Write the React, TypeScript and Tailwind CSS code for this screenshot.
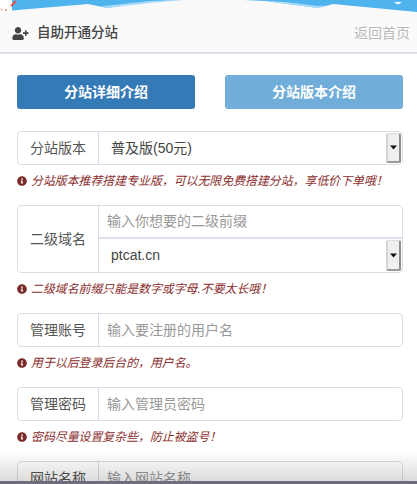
import React from "react";
import { FaUserPlus, FaInfoCircle } from "react-icons/fa";

const font = { fontFamily: '"Liberation Sans","Noto Sans CJK SC",sans-serif' };

function Arrow() {
  return (
    <div className="w-[15px] shrink-0 self-stretch mt-[1px] mb-[1px] mr-[1px] bg-[#efefef] border-l-[2px] border-l-[#d5d5d5] border-r-[2px] border-r-[#8e8e8e] border-b-[2px] border-b-[#9a9a9a] border-t border-t-[#dcdcdc] rounded-[2px] flex items-center justify-center">
      <svg width="7" height="5" viewBox="0 0 7 5"><path d="M0 0.5h7L3.5 4.5z" fill="#111" /></svg>
    </div>
  );
}

function Help({ text }: { text: string }) {
  return (
    <div className="flex items-center h-[18px] mt-[7px] text-[11.9px] italic text-[#8a2c2c]">
      <FaInfoCircle className="w-[10px] h-[10px] mr-[4px] text-[#7a2a2a] shrink-0" />
      <span className="pt-[1px]">{text}</span>
    </div>
  );
}

function Label({ text }: { text: string }) {
  return (
    <div className="w-[81px] shrink-0 flex items-center justify-center text-[14px] text-[#555] border-r border-[#d5dbe6]">
      {text}
    </div>
  );
}

function InputRow({ label, placeholder }: { label: string; placeholder: string }) {
  return (
    <div className="flex h-[34px] border border-[#d9dee8] rounded-[4px] bg-white">
      <Label text={label} />
      <div className="flex-1 pl-[8px] flex items-center text-[14px] text-[#999]">{placeholder}</div>
    </div>
  );
}

export default function App() {
  return (
    <div className="relative w-[417px] h-[484px] overflow-hidden bg-white" style={font}>
      <div className="relative h-[13px] bg-[#f9f9f9]">
        <svg className="absolute left-0 top-0" width="417" height="13" viewBox="0 0 417 13">
          <path d="M12 0H182L150 1.5L107 8L88 4L12 10.5Z" fill="#4fb3ee" />
          <path d="M100 6.5L150 1L182 0L150 3L107 8Z" fill="#a8dcf8" />
          <path d="M244 0H417V12L333 4L318 8L265 1Z" fill="#4fb3ee" />
          <path d="M262 0.5L285 2L318 6L325 5.5L318 8Z" fill="#a8dcf8" />
          <path d="M394 2h8l-4 2.5z" fill="#fff" />
          <path d="M0 0H12V10.5L9 13H0Z" fill="#fff" />
          <path d="M11 6L16 1" stroke="#e2574c" strokeWidth="2" />
          <circle cx="1.5" cy="9.5" r="1" fill="#f3a39a" />
          <circle cx="6" cy="10" r="1" fill="#e2874c" />
        </svg>
      </div>
      <div className="flex items-center justify-between h-[41px] bg-[#fafafa] border-b-[2px] border-[#dde2ea] pl-[12px] pr-[7px] pt-[2px]">
        <div className="flex items-center">
          <FaUserPlus className="w-[17px] h-[13px] text-[#444]" />
          <span className="ml-[8px] text-[13.5px] text-[#444] font-medium">自助开通分站</span>
        </div>
        <span className="text-[14px] text-[#bbb]">返回首页</span>
      </div>
      <div className="pl-[17px] pr-[14px] pt-[21px]">
        <div className="flex justify-between">
          <div className="w-[178px] h-[34px] rounded-[3px] bg-[#337ab7] text-white text-[14px] font-bold flex items-center justify-center">分站详细介绍</div>
          <div className="w-[178px] h-[34px] rounded-[3px] bg-[#70aed9] text-white text-[14px] font-bold flex items-center justify-center">分站版本介绍</div>
        </div>
        <div className="mt-[22px] flex h-[34px] border border-[#d9dee8] rounded-[4px] bg-white">
          <Label text="分站版本" />
          <div className="flex-1 pl-[12px] flex items-center text-[14px] text-[#444]">普及版(50元)</div>
          <Arrow />
        </div>
        <Help text="分站版本推荐搭建专业版，可以无限免费搭建分站，享低价下单哦！" />
        <div className="mt-[15px] flex h-[68px] border border-[#d9dee8] rounded-[4px] bg-white">
          <Label text="二级域名" />
          <div className="flex-1 flex flex-col">
            <div className="h-[33px] pl-[8px] flex items-center text-[14px] text-[#999] border-b-[2px] border-[#dde2ee]">输入你想要的二级前缀</div>
            <div className="flex-1 flex">
              <div className="flex-1 pl-[12px] flex items-center text-[14px] text-[#444]">ptcat.cn</div>
              <Arrow />
            </div>
          </div>
        </div>
        <Help text="二级域名前缀只能是数字或字母.不要太长哦！" />
        <div className="mt-[15px]"><InputRow label="管理账号" placeholder="输入要注册的用户名" /></div>
        <Help text="用于以后登录后台的，用户名。" />
        <div className="mt-[15px]"><InputRow label="管理密码" placeholder="输入管理员密码" /></div>
        <Help text="密码尽量设置复杂些，防止被盗号！" />
        <div className="mt-[15px]"><InputRow label="网站名称" placeholder="输入网站名称" /></div>
      </div>
      <div className="absolute left-0 right-0 bottom-0 h-[34px] bg-gradient-to-b from-transparent to-[#00000026]" />
      <div className="absolute left-0 right-0 bottom-0 h-[3px] bg-[#6f6c80]" />
    </div>
  );
}
